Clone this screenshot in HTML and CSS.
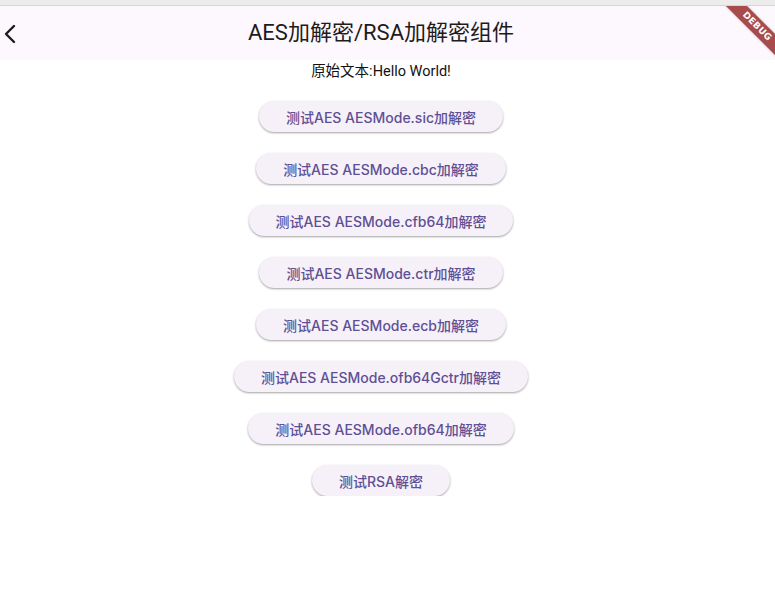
FILE: index.html
```html
<!DOCTYPE html>
<html lang="zh">
<head>
<meta charset="utf-8">
<title>AES加解密/RSA加解密组件</title>
<link rel="stylesheet" href="styles.css">
</head>
<body>
<div class="strip"></div>
<header class="appbar">
  <button class="back" aria-label="返回">
    <svg width="14" height="20" viewBox="0 0 14 20"><path d="M11 2 L3 10 L11 18" fill="none" stroke="#1d1b20" stroke-width="2.4" stroke-linecap="round" stroke-linejoin="round"/></svg>
  </button>
  <h1 class="title">AES加解密/RSA加解密组件</h1>
</header>
<main class="content">
  <p class="label">原始文本:Hello World!</p>
  <div class="buttons">
    <button class="btn">测试AES AESMode.sic加解密</button>
    <button class="btn">测试AES AESMode.cbc加解密</button>
    <button class="btn">测试AES AESMode.cfb64加解密</button>
    <button class="btn">测试AES AESMode.ctr加解密</button>
    <button class="btn">测试AES AESMode.ecb加解密</button>
    <button class="btn">测试AES AESMode.ofb64Gctr加解密</button>
    <button class="btn">测试AES AESMode.ofb64加解密</button>
    <button class="btn">测试RSA解密</button>
  </div>
</main>
<div class="debug">DEBUG</div>
</body>
</html>
```

FILE: styles.css
```css
html, body {
  margin: 0;
  padding: 0;
  background: #ffffff;
  font-family: Roboto, "Noto Sans CJK SC", sans-serif;
  overflow: hidden;
}

.strip {
  position: relative;
  z-index: 2;
  height: 5px;
  background: #ececea;
  border-bottom: 1px solid #d6d6d4;
}

.appbar {
  height: 54px;
  background: #fdf8fd;
  display: flex;
  align-items: center;
  justify-content: center;
  padding-right: 13px;
  position: relative;
}

.back {
  position: absolute;
  left: 2px;
  top: 17px;
  width: 16px;
  height: 22px;
  padding: 0;
  border: 0;
  background: transparent;
  display: flex;
  align-items: center;
  justify-content: center;
}

.title {
  margin: 0;
  font-size: 22px;
  font-weight: 400;
  color: #1d1b20;
  line-height: 28px;
  padding-bottom: 1px;
}

.content {
  display: flex;
  flex-direction: column;
  align-items: center;
  padding-right: 13px;
}

.label {
  margin: 2px 0 0;
  font-size: 14.5px;
  line-height: 20px;
  color: #111111;
}

.buttons {
  margin-top: 19px;
  display: flex;
  flex-direction: column;
  align-items: center;
  gap: 21px;
}

.btn {
  height: 31px;
  padding: 0 27px;
  border: 0;
  border-radius: 16px;
  background: #f6f1f9;
  color: #5f4f94;
  font-family: Inter, "Noto Sans CJK SC", sans-serif;
  font-size: 14px;
  font-weight: 500;
  box-shadow: 0 1px 2px rgba(0, 0, 0, 0.28), 0 1px 3px rgba(0, 0, 0, 0.1);
}

.debug {
  position: absolute;
  z-index: 1;
  left: 697px;
  top: 19px;
  width: 120px;
  height: 15px;
  line-height: 15px;
  transform: rotate(45deg);
  background: #a84b4c;
  color: #ffffff;
  font-family: "DejaVu Sans", sans-serif;
  font-size: 9px;
  font-weight: 800;
  text-align: center;
  letter-spacing: 0.3px;
  box-shadow: 0 0 3px rgba(0, 0, 0, 0.2);
}
```
